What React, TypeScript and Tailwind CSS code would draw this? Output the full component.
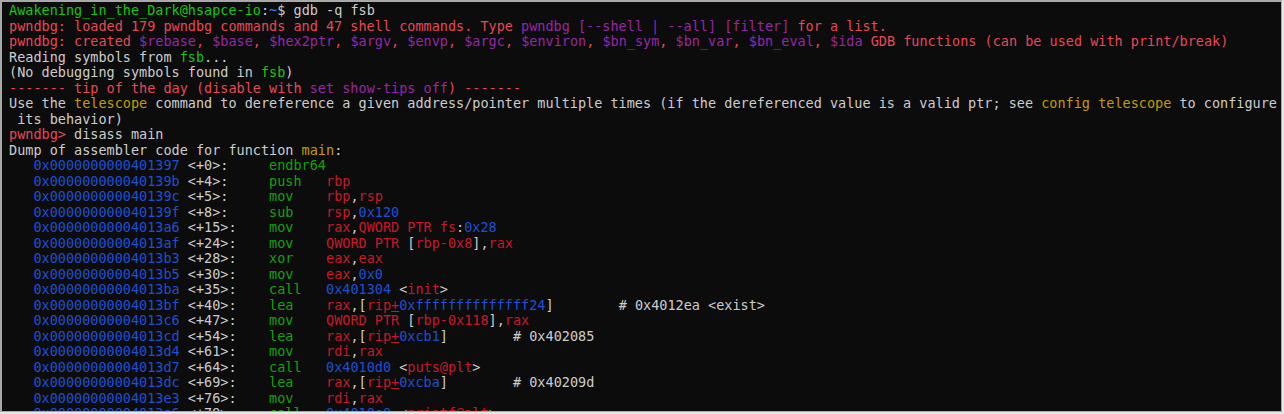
import React from 'react';

type Seg = [string, string, boolean?];

const W = 'text-[#cccccc]';
const R = 'text-[#e74856]';
const DR = 'text-[#c8182a]';
const P = 'text-[#9627a6]';
const G = 'text-[#16c60c]';
const DG = 'text-[#13a10e]';
const B = 'text-[#1f4fd6]';
const Y = 'text-[#c19c00]';
const LB = 'text-[#3b78ff]';

const header: Seg[][] = [
  [['Awakening_in_the_Dark@hsapce-io', G], [':', W], ['~', LB], ['$ gdb -q fsb', W]],
  [
    ['pwndbg: loaded 179 pwndbg commands and 47 shell commands. Type ', R],
    ['pwndbg [--shell | --all] [filter]', P],
    [' for a list.', R],
  ],
  [
    ['pwndbg: created ', R],
    ['$rebase', P], [', ', R], ['$base', P], [', ', R], ['$hex2ptr', P], [', ', R],
    ['$argv', P], [', ', R], ['$envp', P], [', ', R], ['$argc', P], [', ', R],
    ['$environ', P], [', ', R], ['$bn_sym', P], [', ', R], ['$bn_var', P], [', ', R],
    ['$bn_eval', P], [', ', R], ['$ida', P],
    [' GDB functions (can be used with print/break)', R],
  ],
  [['Reading symbols from ', W], ['fsb', G], ['...', W]],
  [['(No debugging symbols found in ', W], ['fsb', G], [')', W]],
  [['------- tip of the day (disable with ', R], ['set show-tips off', P], [') -------', R]],
  [
    ['Use the ', W], ['telescope', Y],
    [' command to dereference a given address/pointer multiple times (if the dereferenced value is a valid ptr; see ', W],
    ['config telescope', Y], [' to configure', W],
  ],
  [[' its behavior)', W]],
  [['pwndbg> ', R], ['disass main', W]],
  [['Dump of assembler code for function ', W], ['main', Y], [':', W]],
];

type Row = { addr: string; off: string; mn: string; ops: Seg[]; note?: string };

const ripOps = (disp: string): Seg[] => [
  ['rax', DR], [',[', W], ['rip', DR], ['+', DR, true], [disp, B], [']', W],
];

const rows: Row[] = [
  { addr: '401397', off: '+0', mn: 'endbr64', ops: [] },
  { addr: '40139b', off: '+4', mn: 'push', ops: [['rbp', DR]] },
  { addr: '40139c', off: '+5', mn: 'mov', ops: [['rbp', DR], [',', W], ['rsp', DR]] },
  { addr: '40139f', off: '+8', mn: 'sub', ops: [['rsp', DR], [',', W], ['0x120', B]] },
  { addr: '4013a6', off: '+15', mn: 'mov', ops: [['rax', DR], [',', W], ['QWORD PTR fs', DR], [':', W], ['0x28', B]] },
  { addr: '4013af', off: '+24', mn: 'mov', ops: [['QWORD PTR ', DR], ['[', W], ['rbp-0x8', DR], ['],', W], ['rax', DR]] },
  { addr: '4013b3', off: '+28', mn: 'xor', ops: [['eax', DR], [',', W], ['eax', DR]] },
  { addr: '4013b5', off: '+30', mn: 'mov', ops: [['eax', DR], [',', W], ['0x0', B]] },
  { addr: '4013ba', off: '+35', mn: 'call', ops: [['0x401304', B], [' <', W], ['init', DR], ['>', W]] },
  { addr: '4013bf', off: '+40', mn: 'lea', ops: ripOps('0xffffffffffffff24'), note: '# 0x4012ea <exist>' },
  { addr: '4013c6', off: '+47', mn: 'mov', ops: [['QWORD PTR ', DR], ['[', W], ['rbp-0x118', DR], ['],', W], ['rax', DR]] },
  { addr: '4013cd', off: '+54', mn: 'lea', ops: ripOps('0xcb1'), note: '# 0x402085' },
  { addr: '4013d4', off: '+61', mn: 'mov', ops: [['rdi', DR], [',', W], ['rax', DR]] },
  { addr: '4013d7', off: '+64', mn: 'call', ops: [['0x4010d0', B], [' <', W], ['puts@plt', DR], ['>', W]] },
  { addr: '4013dc', off: '+69', mn: 'lea', ops: ripOps('0xcba'), note: '# 0x40209d' },
  { addr: '4013e3', off: '+76', mn: 'mov', ops: [['rdi', DR], [',', W], ['rax', DR]] },
  { addr: '4013e6', off: '+79', mn: 'call', ops: [['0x4010e0', B], [' <', W], ['printf@plt', DR], ['>', W]] },
];

const Line = ({ segs }: { segs: Seg[] }) => (
  <div className="h-[15.5px] whitespace-pre">
    {segs.map(([t, c, u], i) => (
      <span key={i} className={u ? `${c} underline decoration-1 underline-offset-[1px]` : c}>
        {t}
      </span>
    ))}
  </div>
);

function asmLine(row: Row): Seg[] {
  const head = `   0x0000000000${row.addr}`;
  const off = ` <${row.off}>:`.padEnd(32 - head.length, ' ');
  const segs: Seg[] = [
    [head, B],
    [off, W],
    [row.ops.length ? row.mn.padEnd(7, ' ') : row.mn, DG],
    ...row.ops,
  ];
  if (row.note) segs.push(['        ' + row.note, W]);
  return segs;
}

export default function App() {
  return (
    <div className="w-[1284px] h-[414px] overflow-hidden bg-[#e6e6e6]">
      <div className="w-[1282px] h-[412px] overflow-hidden border-t-2 border-l-2 border-b border-r border-[#a9a9a9] bg-[#0c0c0c] pl-[7px] pt-[1px] font-['DejaVu_Sans_Mono','Liberation_Mono',monospace] text-[13.5px] leading-[15.5px]">
        {header.map((segs, i) => (
          <Line key={'h' + i} segs={segs} />
        ))}
        {rows.map((row) => (
          <Line key={row.addr} segs={asmLine(row)} />
        ))}
      </div>
    </div>
  );
}
